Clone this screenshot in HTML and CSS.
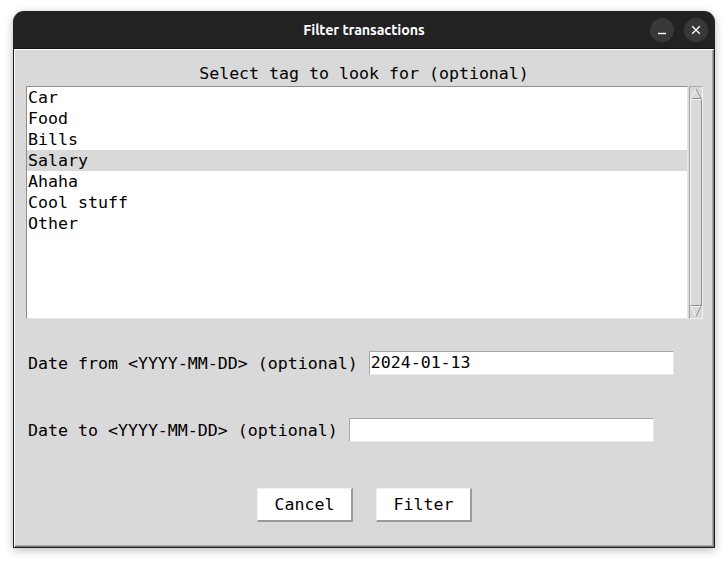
FILE: index.html
```html
<!DOCTYPE html>
<html>
<head>
<meta charset="utf-8">
<link rel="stylesheet" href="styles.css">
</head>
<body>
<div class="window">
  <div class="titlebar">
    <span class="title">Filter transactions</span>
    <div class="wbtns">
      <span class="wbtn"><svg width="24" height="24" viewBox="0 0 24 24"><path d="M8 15.5h8" stroke="#fff" stroke-width="1.4"/></svg></span>
      <span class="wbtn"><svg width="24" height="24" viewBox="0 0 24 24"><path d="M8.2 8.2l7.6 7.6M15.8 8.2l-7.6 7.6" stroke="#fff" stroke-width="1.4"/></svg></span>
    </div>
  </div>
  <div class="frame">
    <div class="heading">Select tag to look for (optional)</div>
    <div class="listwrap">
      <div class="listbox">
        <div class="item">Car</div>
        <div class="item">Food</div>
        <div class="item">Bills</div>
        <div class="item sel">Salary</div>
        <div class="item">Ahaha</div>
        <div class="item">Cool stuff</div>
        <div class="item">Other</div>
      </div>
      <div class="scrollbar">
        <div class="arrow"><svg width="12" height="12" viewBox="0 0 12 12"><path d="M1 11.5L6 1.5L11 11.5" fill="#d9d9d9" stroke="#f4f4f4"/><path d="M1.5 11.5H11.5" stroke="#8c8c8c"/><path d="M6 1.5L11 11.5" stroke="#8c8c8c" fill="none"/></svg></div>
        <div class="slider"></div>
        <div class="arrow"><svg width="12" height="12" viewBox="0 0 12 12"><path d="M1 0.5L6 10.5L11 0.5Z" fill="#d9d9d9" stroke="#f4f4f4"/><path d="M6 10.5L11 0.5" stroke="#8c8c8c" fill="none"/></svg></div>
      </div>
    </div>
    <div class="row row-from">
      <span class="label">Date from &lt;YYYY-MM-DD&gt; (optional)</span>
      <div class="entry">2024-01-13</div>
    </div>
    <div class="row row-to">
      <span class="label">Date to &lt;YYYY-MM-DD&gt; (optional)</span>
      <div class="entry"></div>
    </div>
    <div class="buttons">
      <div class="btn">Cancel</div>
      <div class="btn">Filter</div>
    </div>
  </div>
</div>
</body>
</html>
```

FILE: styles.css
```css
html, body {
  margin: 0;
  padding: 0;
  background: #ffffff;
}
body {
  width: 728px;
  height: 566px;
  overflow: hidden;
}
.window {
  margin: 11px 0 0 13px;
  width: 702px;
  border-radius: 11px 11px 0 0;
  box-shadow: 0 2px 9px rgba(0,0,0,0.28);
  background: #222222;
}
.titlebar {
  height: 37px;
  position: relative;
  display: flex;
  align-items: center;
  justify-content: center;
  border-bottom: 1px solid #111;
  border-radius: 11px 11px 0 0;
}
.title {
  font-family: "Ubuntu", "Noto Sans", sans-serif;
  font-weight: 700;
  font-size: 14.3px;
  color: #ffffff;
  letter-spacing: -0.1px;
}
.wbtns {
  position: absolute;
  right: 7px;
  top: 7px;
  display: flex;
  gap: 10px;
}
.wbtn {
  width: 24px;
  height: 24px;
  border-radius: 50%;
  background: #383838;
  display: block;
}
.wbtn svg { display: block; }
.frame {
  background: #d9d9d9;
  height: 498px;
  border-left: 1px solid #1e1e1e;
  border-right: 1px solid #1e1e1e;
  border-bottom: 1px solid #1e1e1e;
  box-shadow: inset 1px 1px 0 #ffffff, inset -1px -1px 0 #7a7a7a, inset -2px -2px 0 #a8a8a8;
  font-family: "DejaVu Sans Mono", "Liberation Mono", monospace;
  font-size: 16.6px;
  color: #000;
  display: flex;
  flex-direction: column;
}
.heading {
  margin-top: 14px;
  height: 21px;
  line-height: 21px;
  text-align: center;
}
.listwrap {
  margin: 2px 0 0 12px;
  display: flex;
  gap: 1px;
  height: 233px;
}
.listbox {
  width: 660px;
  background: #ffffff;
  border-top: 1px solid #8e8e8e;
  border-left: 1px solid #8e8e8e;
  border-bottom: 1px solid #e6e6e6;
  border-right: 1px solid #e6e6e6;
}
.item {
  height: 21px;
  line-height: 21px;
  padding-left: 1px;
  white-space: pre;
}
.item.sel {
  background: #d9d9d9;
}
.scrollbar {
  width: 14px;
  box-sizing: border-box;
  border: 1px solid #a8a8a8;
  border-right-color: #f2f2f2;
  border-bottom-color: #f2f2f2;
  background: #d9d9d9;
  display: flex;
  flex-direction: column;
}
.arrow {
  height: 12px;
  display: flex;
  justify-content: center;
}
.arrow svg { display: block; }
.slider {
  flex: 1;
  border-top: 1px solid #f4f4f4;
  border-left: 1px solid #f4f4f4;
  border-right: 1px solid #8c8c8c;
  border-bottom: 1px solid #8c8c8c;
  background: #d9d9d9;
}
.row {
  display: flex;
  align-items: center;
  height: 24px;
  padding-left: 14px;
  gap: 11px;
}
.row-from { margin-top: 32px; }
.row-to { margin-top: 43px; }
.label {
  white-space: pre;
  line-height: 21px;
}
.entry {
  width: 305px;
  height: 24px;
  box-sizing: border-box;
  background: #ffffff;
  border: 1px solid #a8a8a8;
  border-right-color: #e8e8e8;
  border-bottom-color: #e8e8e8;
  line-height: 21px;
  padding-left: 1px;
  white-space: pre;
}
.buttons {
  margin-top: 46px;
  display: flex;
  justify-content: center;
  gap: 23px;
  padding-left: 1px;
}
.btn {
  width: 96px;
  height: 34px;
  box-sizing: border-box;
  background: #ffffff;
  border-top: 1px solid #f0f0f0;
  border-left: 1px solid #f0f0f0;
  border-right: 2px solid #9a9a9a;
  border-bottom: 2px solid #9a9a9a;
  display: flex;
  align-items: center;
  justify-content: center;
  line-height: 21px;
}
```
